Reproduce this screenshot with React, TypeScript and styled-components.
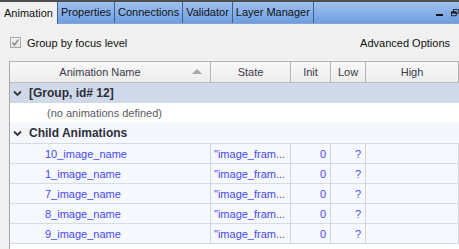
import React from 'react'
import styled, { createGlobalStyle } from 'styled-components'

const TABS = ['Animation', 'Properties', 'Connections', 'Validator', 'Layer Manager']
const ANIMATIONS = ['10_image_name', '1_image_name', '7_image_name', '8_image_name', '9_image_name']
const COLS = '201px 80px 40px 35px 1fr'

const Chevron = () => (
  <svg width="9" height="7" viewBox="0 0 9 7">
    <path d="M1 1.5 L4.5 5 L8 1.5" fill="none" stroke="#333" strokeWidth="1.8" />
  </svg>
)

export default function App() {
  return (
    <Panel>
      <GlobalStyle />
      <TabBar>
        {TABS.map((t, i) => (
          <Tab key={t} active={i === 0}>{t}</Tab>
        ))}
        <Spacer />
        <Minimize />
        <Restore>
          <svg width="10" height="10" viewBox="0 0 10 10">
            <rect x="3" y="0.5" width="6" height="5" fill="none" stroke="#111" strokeWidth="1" />
            <rect x="0.5" y="3.5" width="6" height="5" fill="#7aa6e2" stroke="#111" strokeWidth="1" />
            <line x1="0.5" y1="4.5" x2="6.5" y2="4.5" stroke="#111" strokeWidth="2" />
          </svg>
        </Restore>
      </TabBar>

      <Options>
        <CheckLabel>
          <Box>
            <svg width="9" height="9" viewBox="0 0 9 9">
              <path d="M1.5 4.5 L3.5 7 L7.5 1.5" fill="none" stroke="#8a8a8a" strokeWidth="1.4" />
            </svg>
          </Box>
          Group by focus level
        </CheckLabel>
        <Advanced>Advanced Options</Advanced>
      </Options>

      <Table>
        <HeaderRow>
          <HeadCell shift={20}>
            Animation Name
            <SortArrow />
          </HeadCell>
          <HeadCell>State</HeadCell>
          <HeadCell>Init</HeadCell>
          <HeadCell>Low</HeadCell>
          <HeadCell>High</HeadCell>
        </HeaderRow>

        <GroupRow tone="#cfd9e8">
          <Chevron />
          [Group, id# 12]
        </GroupRow>
        <EmptyRow>(no animations defined)</EmptyRow>
        <GroupRow tone="#f4f8fc">
          <Chevron />
          Child Animations
        </GroupRow>

        {ANIMATIONS.map(name => (
          <DataRow key={name}>
            <NameCell>{name}</NameCell>
            <StateCell>"image_fram...</StateCell>
            <NumCell>0</NumCell>
            <NumCell>?</NumCell>
            <Cell />
          </DataRow>
        ))}
      </Table>
    </Panel>
  )
}

const GlobalStyle = createGlobalStyle`
  html, body {
    margin: 0;
    padding: 0;
    background: #f0f0f0;
  }
  body {
    font-family: "Liberation Sans", Arial, sans-serif;
    font-size: 11px;
    color: #111;
  }
`

const Panel = styled.div`
  width: 459px;
  height: 249px;
  overflow: hidden;
  background: #f0f0f0;
  border-top: 2px solid #4e4e4e;
  box-sizing: border-box;
`

const TabBar = styled.div`
  display: flex;
  align-items: stretch;
  height: 21px;
  background: linear-gradient(#9fc2ef, #6d9de0);
  border-bottom: 1px solid #8aa4c8;
`

const Tab = styled.div<{ active?: boolean }>`
  padding: 0 3px;
  line-height: 21px;
  border-right: 1px solid #3f5f8c;
  white-space: nowrap;

  ${({ active }) => active && `
    padding: 0 4px;
    background: #f0f0f0;
    margin-bottom: -1px;
    line-height: 22px;
  `}
`

const Spacer = styled.div`
  flex: 1;
`

const Minimize = styled.div`
  width: 7px;
  height: 2px;
  background: #111;
  align-self: center;
  margin: 4px 8px 0 0;
`

const Restore = styled.div`
  width: 8px;
  overflow: hidden;
  align-self: center;
  display: flex;
`

const Options = styled.div`
  display: flex;
  align-items: center;
  justify-content: space-between;
  height: 37px;
  padding: 0 8px 0 10px;
`

const CheckLabel = styled.label`
  display: flex;
  align-items: center;
  gap: 6px;
`

const Box = styled.span`
  width: 11px;
  height: 11px;
  box-sizing: border-box;
  border: 1px solid #a8a8a8;
  background: linear-gradient(#f4f4f4, #e4e4e4);
  display: flex;
  align-items: center;
  justify-content: center;
`

const Advanced = styled.div`
  padding-right: 1px;
`

const Table = styled.div`
  margin-left: 9px;
  border-left: 1px solid #a6a6a6;
  border-top: 1px solid #b4b4b4;
  background: #fff;
  height: 200px;
`

const HeaderRow = styled.div`
  display: grid;
  grid-template-columns: ${COLS};
  height: 20px;
  background: linear-gradient(#f8f8f8, #ececec);
  border-bottom: 1px solid #bcbcbc;
`

const HeadCell = styled.div<{ shift?: number }>`
  position: relative;
  display: flex;
  align-items: center;
  justify-content: center;
  padding-right: ${({ shift }) => shift || 0}px;
  color: #3b3b4b;
  border-right: 1px solid #b4b4b4;
`

const SortArrow = styled.span`
  position: absolute;
  right: 8px;
  top: 7px;
  width: 0;
  height: 0;
  border-left: 5px solid transparent;
  border-right: 5px solid transparent;
  border-bottom: 5px solid #a8a8a8;
`

const GroupRow = styled.div<{ tone: string }>`
  display: flex;
  align-items: center;
  gap: 7px;
  height: 20px;
  padding-left: 3px;
  background: ${({ tone }) => tone};
  font-weight: bold;
  font-size: 12px;
  color: #2e2e3a;
`

const EmptyRow = styled.div`
  height: 20px;
  line-height: 20px;
  padding-left: 37px;
  background: #fff;
  color: #5a5a66;
`

const DataRow = styled.div`
  display: grid;
  grid-template-columns: ${COLS};
  height: 20px;
  background: #f5f9fe;
  border-top: 1px solid #d6dbe2;
  box-sizing: border-box;
  color: #4747f5;

  &:last-child {
    border-bottom: 1px solid #d6dbe2;
    height: 21px;
  }
`

const Cell = styled.div`
  display: flex;
  align-items: center;
  border-right: 1px solid #d2d6dc;
  overflow: hidden;
  white-space: nowrap;
`

const NameCell = styled(Cell)`
  padding-left: 35px;
`

const StateCell = styled(Cell)`
  padding-left: 3px;
`

const NumCell = styled(Cell)`
  justify-content: flex-end;
  padding-right: 4px;
`
